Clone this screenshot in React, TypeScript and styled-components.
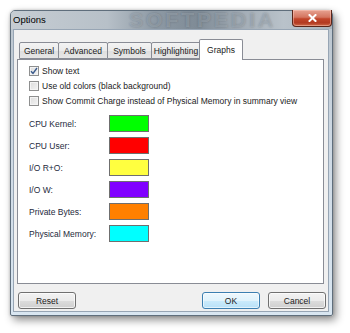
import React from 'react';
import styled, { createGlobalStyle } from 'styled-components';

const GlobalStyle = createGlobalStyle`
  html, body {
    margin: 0;
    padding: 0;
    background: #ffffff;
  }
  body {
    font-family: "Liberation Sans", Arial, sans-serif;
    font-size: 8.5px;
    color: #1b1b1b;
  }
  * {
    box-sizing: border-box;
  }
`;

const Stage = styled.div`
  width: 350px;
  height: 333px;
  padding: 10px 0 0 10px;
  overflow: hidden;
`;

const Window = styled.div`
  width: 323px;
  height: 306px;
  display: flex;
  flex-direction: column;
  border: 1px solid #5f6e7c;
  border-radius: 5px 5px 2px 2px;
  background: linear-gradient(180deg, #b9c3cc 0%, #cdd8e3 40%, #d9e6f1 100%);
  box-shadow: 3px 4px 9px rgba(0, 0, 0, 0.45), 0 0 3px rgba(0, 0, 0, 0.2);
`;

const TitleBar = styled.div`
  position: relative;
  height: 18px;
  display: flex;
  align-items: flex-start;
  justify-content: space-between;
  padding-left: 2px;
  border-radius: 4px 4px 0 0;
  background: linear-gradient(
    90deg,
    #c6cdd3 0%,
    #b7c0c8 30%,
    #8d99a4 45%,
    #7f8b96 58%,
    #a3adb6 72%,
    #b9c2ca 85%,
    #aab4bd 100%
  );
`;

const Title = styled.span`
  line-height: 18px;
  font-size: 9.5px;
  color: #000;
`;

const Watermark = styled.span`
  position: absolute;
  left: 118px;
  top: -3px;
  font-family: "Liberation Sans", sans-serif;
  font-weight: bold;
  font-size: 21px;
  letter-spacing: 3px;
  color: rgba(200, 210, 218, 0.3);
  text-shadow: 0 0 2px rgba(40, 50, 60, 0.3);
  pointer-events: none;
`;

const CloseButton = styled.div`
  width: 40px;
  height: 17px;
  margin-top: -1px;
  display: flex;
  align-items: center;
  justify-content: center;
  border: 1px solid #5a2519;
  border-top: none;
  border-radius: 0 0 4px 4px;
  background: linear-gradient(180deg, #e7a291 0%, #d47560 45%, #c2452a 55%, #b23a22 80%, #cf6a49 100%);
  box-shadow: inset 0 0 0 1px rgba(255, 210, 200, 0.45);
`;

const Client = styled.div`
  flex: 1;
  display: flex;
  flex-direction: column;
  margin: 0 3px 3px 2px;
  padding: 9px 4px 2px 3px;
  background: #f0f0f0;
  border: 1px solid #97a5b4;
`;

const TabRow = styled.div`
  height: 20px;
  display: flex;
  align-items: flex-end;
  padding-left: 2px;
  position: relative;
  z-index: 1;
`;

const Tab = styled.div<{ $w: number; $active?: boolean }>`
  width: ${(p) => p.$w}px;
  height: ${(p) => (p.$active ? 21 : 17)}px;
  margin-left: ${(p) => (p.$active ? -2 : -1)}px;
  margin-bottom: ${(p) => (p.$active ? -1 : 0)}px;
  display: flex;
  align-items: center;
  justify-content: center;
  padding-top: ${(p) => (p.$active ? 0 : 1)}px;
  border: 1px solid #898c95;
  border-bottom: ${(p) => (p.$active ? 'none' : '1px solid #898c95')};
  border-radius: 2px 2px 0 0;
  background: ${(p) =>
    p.$active ? '#ffffff' : 'linear-gradient(180deg, #f3f3f3 0%, #ebebeb 50%, #dedede 51%, #e6e6e6 100%)'};
  position: relative;
  z-index: ${(p) => (p.$active ? 2 : 1)};
  font-size: 8.5px;
  white-space: nowrap;
  color: #1b1b1b;
  &:first-child {
    margin-left: 0;
  }
`;

const Panel = styled.div`
  height: 225px;
  display: flex;
  flex-direction: column;
  padding: 3px 11px 0 11px;
  background: #ffffff;
  border: 1px solid #898c95;
`;

const CheckRow = styled.label`
  height: 15px;
  display: flex;
  align-items: center;
  gap: 3px;
  font-size: 8.5px;
  white-space: nowrap;
`;

const Box = styled.span`
  width: 10px;
  height: 10px;
  flex-shrink: 0;
  display: flex;
  align-items: center;
  justify-content: center;
  border: 1px solid #8e8f8f;
  background: linear-gradient(135deg, #dcdcdc 0%, #f4f4f4 100%);
  box-shadow: inset 0 0 0 1px #f4f4f4;
`;

const ColorGrid = styled.div`
  margin-top: 7px;
  display: grid;
  grid-template-columns: 80px 40px;
  grid-auto-rows: 17px;
  row-gap: 5px;
  align-items: center;
`;

const ColorLabel = styled.span`
  font-size: 8.5px;
  color: #1e2a3c;
`;

const Swatch = styled.div<{ $color: string }>`
  width: 40px;
  height: 17px;
  background: ${(p) => p.$color};
  border: 1px solid #6f6f6f;
`;

const ButtonRow = styled.div`
  margin-top: 8px;
  height: 17px;
  display: flex;
  justify-content: space-between;
  padding-left: 1px;
  margin-right: -2px;
`;

const ButtonGroup = styled.div`
  display: flex;
  gap: 8px;
`;

const Button = styled.div<{ $default?: boolean }>`
  width: 58px;
  height: 17px;
  display: flex;
  align-items: center;
  justify-content: center;
  font-size: 8.5px;
  color: #1b1b1b;
  border: 1px solid ${(p) => (p.$default ? '#3c7fb1' : '#707070')};
  border-radius: 3px;
  background: ${(p) =>
    p.$default
      ? 'linear-gradient(180deg, #eef8fd 0%, #e1f3fc 50%, #cbebfc 51%, #b9e1f7 100%)'
      : 'linear-gradient(180deg, #f2f2f2 0%, #ebebeb 50%, #dddddd 51%, #cfcfcf 100%)'};
  box-shadow: inset 0 0 0 1px ${(p) => (p.$default ? 'rgba(255,255,255,0.6)' : 'rgba(255,255,255,0.7)')};
`;

const tabs = [
  { label: 'General', w: 40 },
  { label: 'Advanced', w: 50 },
  { label: 'Symbols', w: 45 },
  { label: 'Highlighting', w: 50 },
  { label: 'Graphs', w: 44, active: true },
];

const checks = [
  { label: 'Show text', checked: true },
  { label: 'Use old colors (black background)', checked: false },
  { label: 'Show Commit Charge instead of Physical Memory in summary view', checked: false },
];

const colors = [
  { label: 'CPU Kernel:', color: '#00ff00' },
  { label: 'CPU User:', color: '#ff0000' },
  { label: 'I/O R+O:', color: '#ffff40' },
  { label: 'I/O W:', color: '#8000ff' },
  { label: 'Private Bytes:', color: '#ff8000' },
  { label: 'Physical Memory:', color: '#00ffff' },
];

const CheckMark = () => (
  <svg width="8" height="8" viewBox="0 0 8 8">
    <path d="M1 4.2 L3 6.5 L7 1" fill="none" stroke="#3a5a8c" strokeWidth="1.4" />
  </svg>
);

const CloseGlyph = () => (
  <svg width="9" height="8" viewBox="0 0 9 8">
    <path d="M1.5 1 L7.5 7 M7.5 1 L1.5 7" stroke="#ffffff" strokeWidth="2" strokeLinecap="square" />
  </svg>
);

export default function App() {
  return (
    <Stage>
      <GlobalStyle />
      <Window>
        <TitleBar>
          <Title>Options</Title>
          <Watermark>SOFTPEDIA</Watermark>
          <CloseButton>
            <CloseGlyph />
          </CloseButton>
        </TitleBar>
        <Client>
          <TabRow>
            {tabs.map((t) => (
              <Tab key={t.label} $w={t.w} $active={t.active}>
                {t.label}
              </Tab>
            ))}
          </TabRow>
          <Panel>
            {checks.map((c) => (
              <CheckRow key={c.label}>
                <Box>{c.checked && <CheckMark />}</Box>
                {c.label}
              </CheckRow>
            ))}
            <ColorGrid>
              {colors.map((c) => (
                <React.Fragment key={c.label}>
                  <ColorLabel>{c.label}</ColorLabel>
                  <Swatch $color={c.color} />
                </React.Fragment>
              ))}
            </ColorGrid>
          </Panel>
          <ButtonRow>
            <Button>Reset</Button>
            <ButtonGroup>
              <Button $default>OK</Button>
              <Button>Cancel</Button>
            </ButtonGroup>
          </ButtonRow>
        </Client>
      </Window>
    </Stage>
  );
}
